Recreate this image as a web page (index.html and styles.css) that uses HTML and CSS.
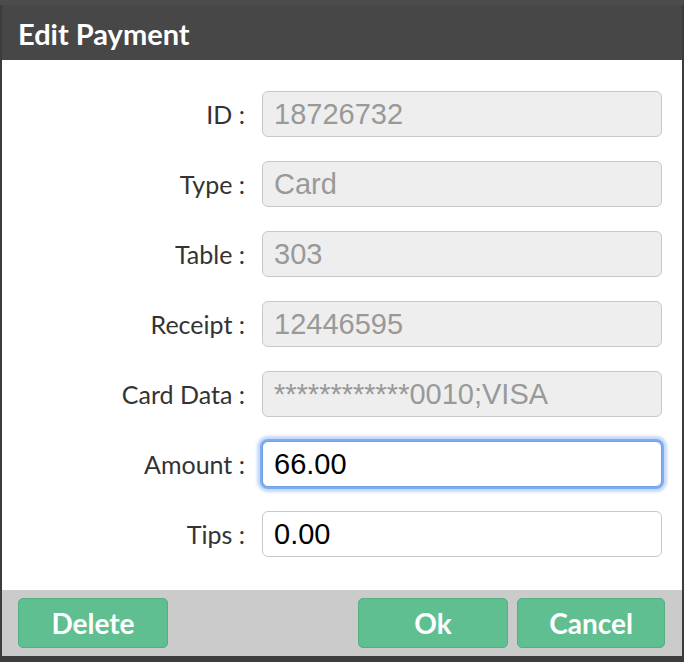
FILE: index.html
```html
<!DOCTYPE html>
<html lang="en">
<head>
<meta charset="utf-8">
<title>Edit Payment</title>
<link rel="stylesheet" href="styles.css">
</head>
<body>
<div class="frame">
  <div class="dialog">
    <div class="dialog-header">
      <h1 class="dialog-title">Edit Payment</h1>
    </div>
    <form class="dialog-body">
      <label class="field-label" for="f-id">ID :</label>
      <input class="field-input is-disabled" id="f-id" type="text" value="18726732" readonly>

      <label class="field-label" for="f-type">Type :</label>
      <input class="field-input is-disabled" id="f-type" type="text" value="Card" readonly>

      <label class="field-label" for="f-table">Table :</label>
      <input class="field-input is-disabled" id="f-table" type="text" value="303" readonly>

      <label class="field-label" for="f-receipt">Receipt :</label>
      <input class="field-input is-disabled" id="f-receipt" type="text" value="12446595" readonly>

      <label class="field-label" for="f-card">Card Data :</label>
      <input class="field-input is-disabled" id="f-card" type="text" value="************0010;VISA" readonly>

      <label class="field-label" for="f-amount">Amount :</label>
      <input class="field-input is-focused" id="f-amount" type="text" value="66.00">

      <label class="field-label" for="f-tips">Tips :</label>
      <input class="field-input" id="f-tips" type="text" value="0.00">
    </form>
    <div class="dialog-footer">
      <button class="btn" type="button">Delete</button>
      <div class="footer-right">
        <button class="btn" type="button">Ok</button>
        <button class="btn btn-narrow" type="button">Cancel</button>
      </div>
    </div>
  </div>
</div>
</body>
</html>
```

FILE: styles.css
```css
* {
  box-sizing: border-box;
}

html, body {
  margin: 0;
  padding: 0;
}

body {
  background: #3c3c3c;
  font-family: Lato, "Open Sans", sans-serif;
}

.frame {
  width: 684px;
  height: 662px;
  background: #3c3c3c;
  border-top: 5px solid #4c4c4c;
  padding: 0 2px 6px 2px;
}

.dialog {
  display: flex;
  flex-direction: column;
  height: 651px;
  background: #ffffff;
}

.dialog-header {
  height: 55px;
  background: #474747;
  display: flex;
  align-items: center;
  padding: 0 16px;
}

.dialog-title {
  margin: 0;
  color: #ffffff;
  font-family: Lato, sans-serif;
  font-weight: 700;
  font-size: 29px;
  line-height: 1;
  padding-top: 2px;
}

.dialog-body {
  margin: 0;
  height: 530px;
  padding: 31px 20px 0 0;
  display: grid;
  grid-template-columns: 1fr 400px;
  grid-auto-rows: 46px;
  column-gap: 17px;
  row-gap: 24px;
}

.field-label {
  display: flex;
  align-items: center;
  justify-content: flex-end;
  font-family: Lato, sans-serif;
  font-size: 25px;
  color: #333333;
  white-space: pre;
}

.field-input {
  width: 400px;
  height: 46px;
  margin: 0;
  padding: 0 11px;
  border: 1px solid #c8c8c8;
  border-radius: 6px;
  background: #ffffff;
  color: #000000;
  font-family: "Liberation Sans", Arial, sans-serif;
  font-size: 29px;
  outline: none;
}

.field-input.is-disabled {
  background: #eeeeee;
  color: #999999;
}

.field-input.is-focused {
  border: 1px solid #6f9fe6;
  box-shadow: 0 0 0 2px #7eacf0, 0 0 3px 5px #c3d8f8;
}

.dialog-footer {
  height: 66px;
  background: #cbcbcb;
  display: flex;
  align-items: center;
  justify-content: space-between;
  padding: 0 17px 0 16px;
}

.footer-right {
  display: flex;
  gap: 9px;
}

.btn {
  width: 150px;
  height: 50px;
  margin: 0;
  padding: 0;
  border: 1px solid #53ae82;
  border-radius: 5px;
  background: #5fbf91;
  color: #ffffff;
  font-family: Lato, sans-serif;
  font-weight: 700;
  font-size: 28px;
  line-height: 1;
  cursor: pointer;
}

.btn-narrow {
  width: 148px;
}
```
